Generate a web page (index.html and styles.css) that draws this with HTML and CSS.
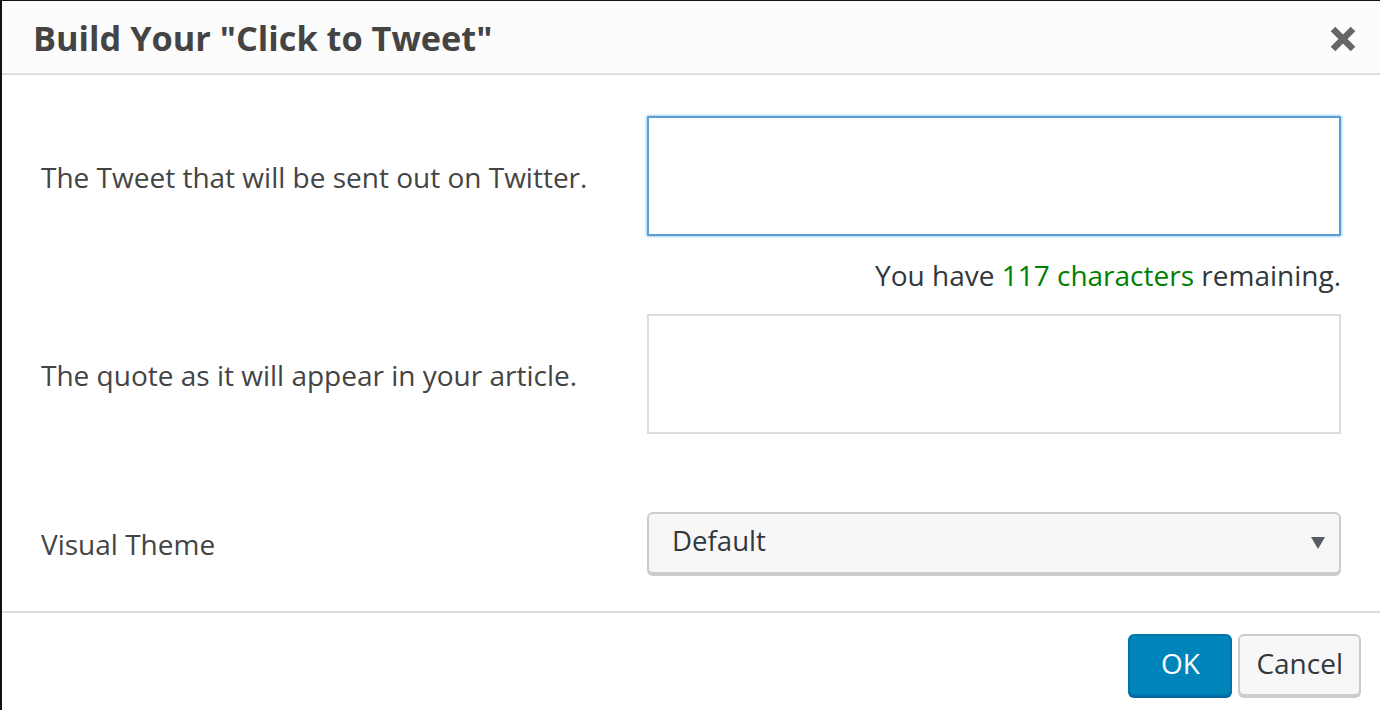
FILE: index.html
```html
<!DOCTYPE html>
<html>
<head>
<meta charset="utf-8">
<link rel="stylesheet" href="styles.css">
</head>
<body>
<div class="dialog">
  <div class="head">
    <h1 class="title">Build Your "Click to Tweet"</h1>
    <button class="close" aria-label="Close">
      <svg width="26" height="26" viewBox="0 0 26 26"><path d="M3 3 L23 23 M23 3 L3 23" stroke="#666" stroke-width="6.5" stroke-linecap="butt" fill="none"/></svg>
    </button>
  </div>
  <div class="body">
    <div class="row">
      <label class="label">The Tweet that will be sent out on Twitter.</label>
      <div class="box box-focus"></div>
    </div>
    <div class="counter">You have <span class="ok">117 characters</span> remaining.</div>
    <div class="row">
      <label class="label">The quote as it will appear in your article.</label>
      <div class="box"></div>
    </div>
    <div class="row row-select">
      <label class="label">Visual Theme</label>
      <div class="select"><span class="value">Default</span><span class="caret"></span></div>
    </div>
  </div>
  <div class="foot">
    <button class="btn btn-primary">OK</button>
    <button class="btn">Cancel</button>
  </div>
</div>
</body>
</html>
```
FILE: styles.css
```css
html, body {
  margin: 0;
  padding: 0;
  height: 100%;
  background: #111;
}
body {
  font-family: "Open Sans", "Noto Sans", sans-serif;
  overflow: hidden;
}
.dialog {
  margin: 1px 0 0 2px;
  height: 709px;
  background: #fff;
  display: flex;
  flex-direction: column;
}
.head {
  height: 72px;
  background: #fcfcfc;
  border-bottom: 2px solid #ddd;
  display: flex;
  align-items: center;
  justify-content: space-between;
  padding: 0 24px 0 31px;
}
.title {
  margin: 0;
  font-size: 34.3px;
  font-weight: 700;
  color: #444;
  line-height: 1;
  position: relative;
  top: 1px;
}
.close {
  background: none;
  border: 0;
  padding: 0;
  width: 26px;
  height: 26px;
  display: flex;
  position: relative;
  top: 2px;
}
.body {
  padding: 41px 39px 0 39px;
}
.row {
  display: grid;
  grid-template-columns: 606px 694px;
  align-items: center;
}
.label {
  font-size: 28px;
  color: #444;
  line-height: 1.3;
  position: relative;
  top: 1px;
}
.box {
  height: 116px;
  border: 2px solid #ddd;
  background: #fff;
}
.box-focus {
  border-color: #5b9dd9;
  box-shadow: 0 0 3px rgba(30, 140, 190, 0.7);
}
.counter {
  height: 78px;
  line-height: 78px;
  text-align: right;
  font-size: 28px;
  color: #32373c;
  width: 1300px;
}
.ok { color: #008000; }
.row-select {
  margin-top: 78px;
}
.select {
  height: 58px;
  border: 2px solid #ccc;
  border-radius: 6px;
  background: #f7f7f7;
  box-shadow: 0 2px 0 #ccc;
  display: flex;
  align-items: center;
  justify-content: space-between;
  padding: 0 14px 0 23px;
  font-size: 27.6px;
  color: #32373c;
}
.value {
  line-height: 1;
  position: relative;
  top: -2px;
}
.caret {
  width: 0;
  height: 0;
  border-left: 7px solid transparent;
  border-right: 7px solid transparent;
  border-top: 12px solid #555d66;
}
.foot {
  margin-top: 37px;
  border-top: 2px solid #ddd;
  padding: 21px 19px 0 0;
  display: flex;
  justify-content: flex-end;
  gap: 6px;
}
.btn {
  height: 62px;
  padding: 0 16px 4px;
  border: 2px solid #ccc;
  border-radius: 6px;
  background: #f7f7f7;
  box-shadow: 0 2px 0 #ccc;
  font-family: "Open Sans", "Noto Sans", sans-serif;
  font-size: 28px;
  color: #32373c;
  line-height: 1;
}
.btn-primary {
  width: 104px;
  background: #0085ba;
  border-color: #0073aa;
  box-shadow: 0 2px 0 #006799;
  color: #fff;
}
```
